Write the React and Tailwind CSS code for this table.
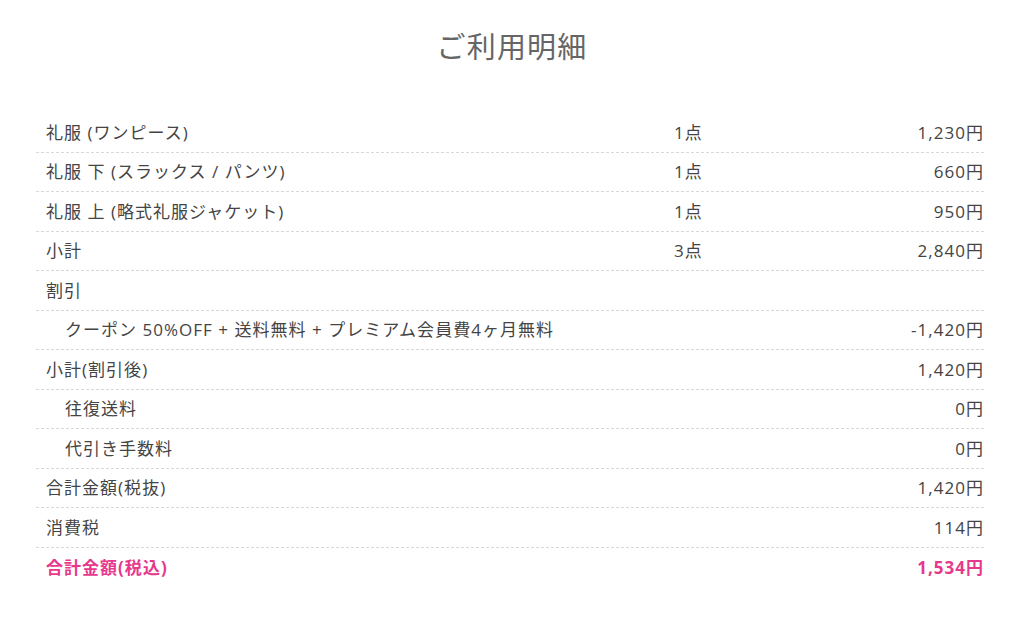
import React from "react";

const rows = [
  { label: "礼服 (ワンピース)", qty: "1点", price: "1,230円" },
  { label: "礼服 下 (スラックス / パンツ)", qty: "1点", price: "660円" },
  { label: "礼服 上 (略式礼服ジャケット)", qty: "1点", price: "950円" },
  { label: "小計", qty: "3点", price: "2,840円" },
  { label: "割引", qty: "", price: "" },
  { label: "クーポン 50%OFF + 送料無料 + プレミアム会員費4ヶ月無料", qty: "", price: "-1,420円", indent: true },
  { label: "小計(割引後)", qty: "", price: "1,420円" },
  { label: "往復送料", qty: "", price: "0円", indent: true },
  { label: "代引き手数料", qty: "", price: "0円", indent: true },
  { label: "合計金額(税抜)", qty: "", price: "1,420円" },
  { label: "消費税", qty: "", price: "114円" },
];

export default function App() {
  return (
    <div
      className="w-[1024px] h-[619px] bg-white text-[#444] overflow-hidden"
      style={{ fontFamily: '"Open Sans", "Noto Sans CJK JP", sans-serif' }}
    >
      <h1 className="text-center text-[29px] leading-none text-[#666] pt-[32px] h-[113px] tracking-[0.04em]">
        ご利用明細
      </h1>
      <div className="ml-[36px] w-[948px]">
        {rows.map((r, i) => (
          <div
            key={i}
            className="flex items-center h-[39.5px] border-b border-dashed border-[#d8d8d8] text-[17px] tracking-[0.06em]"
          >
            <div className={`flex-1 ${r.indent ? "pl-[29px]" : "pl-[10px]"}`}>{r.label}</div>
            <div className="w-[120px]">{r.qty}</div>
            <div className="w-[190px] text-right pr-0">{r.price}</div>
          </div>
        ))}
        <div className="flex items-center h-[39.5px] text-[17px] font-bold text-[#e6388c] tracking-[0.06em]">
          <div className="flex-1 pl-[10px]">合計金額(税込)</div>
          <div className="w-[190px] text-right pr-0">1,534円</div>
        </div>
      </div>
    </div>
  );
}
